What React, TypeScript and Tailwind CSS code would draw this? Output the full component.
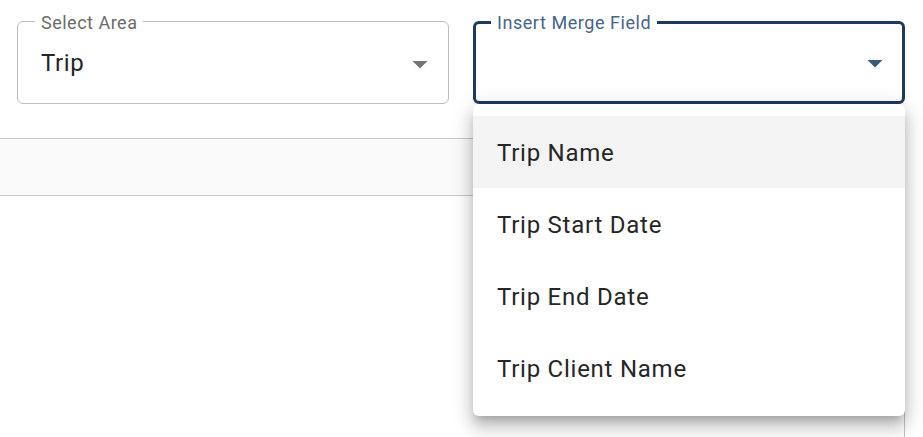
import { useState } from "react";

const fields = ["Trip Name", "Trip Start Date", "Trip End Date", "Trip Client Name"];

function DropArrow({ color }: { color: string }) {
  return (
    <svg viewBox="0 0 24 24" className="w-[36px] h-[36px] shrink-0" fill={color}>
      <path d="M7 10l5 5 5-5z" />
    </svg>
  );
}

export default function App() {
  const [hovered] = useState(0);

  return (
    <div className="w-[923px] h-[437px] bg-white overflow-hidden font-['Roboto','Liberation_Sans',sans-serif] text-[#262626]">
      {/* Selects */}
      <div className="flex gap-[24px] pl-[17px] pt-[21px]">
        <div className="relative w-[432px] h-[83px] rounded-[6px] border border-[#bdbdbd] flex items-center pl-[23px] pr-[10px]">
          <span className="absolute left-[17px] -top-[8px] bg-white px-[6px] text-[18px] leading-[18px] text-[#6b6b6b] tracking-[0.5px]">
            Select Area
          </span>
          <span className="text-[24px] leading-[24px] tracking-[0.6px]">Trip</span>
          <div className="ml-auto mt-[3px]">
            <DropArrow color="#757575" />
          </div>
        </div>

        <div className="relative w-[432px]">
          <div className="relative h-[83px] rounded-[6px] border-[3px] border-[#1c3b5e] flex items-center pl-[21px] pr-[9px]">
            <span className="absolute left-[15px] -top-[10px] bg-white px-[6px] text-[18px] leading-[18px] text-[#46658a] tracking-[0.55px]">
              Insert Merge Field
            </span>
            <div className="ml-auto mt-[1px]">
              <DropArrow color="#3b5a80" />
            </div>
          </div>

          {/* Menu */}
          <ul className="absolute top-full left-0 z-10 w-full bg-white rounded-[6px] py-[12px] shadow-[0_7px_8px_-4px_rgba(0,0,0,0.2),0_12px_15px_2px_rgba(0,0,0,0.14),0_4px_21px_3px_rgba(0,0,0,0.12)]">
            {fields.map((f, i) => (
              <li
                key={f}
                className={
                  i === hovered
                    ? "h-[72px] flex items-center px-[24px] pt-[2px] text-[24px] leading-[24px] tracking-[0.75px] bg-[#f4f4f4]"
                    : "h-[72px] flex items-center px-[24px] pt-[2px] text-[24px] leading-[24px] tracking-[0.75px]"
                }
              >
                {f}
              </li>
            ))}
          </ul>
        </div>
      </div>

      {/* Editor */}
      <div className="mt-[34px] w-[905px] border-r border-[#c4c4c4]">
        <div className="h-[58px] border-y border-[#c8c8c8] bg-[#fafafa]" />
        <div className="h-[250px]" />
      </div>
    </div>
  );
}
